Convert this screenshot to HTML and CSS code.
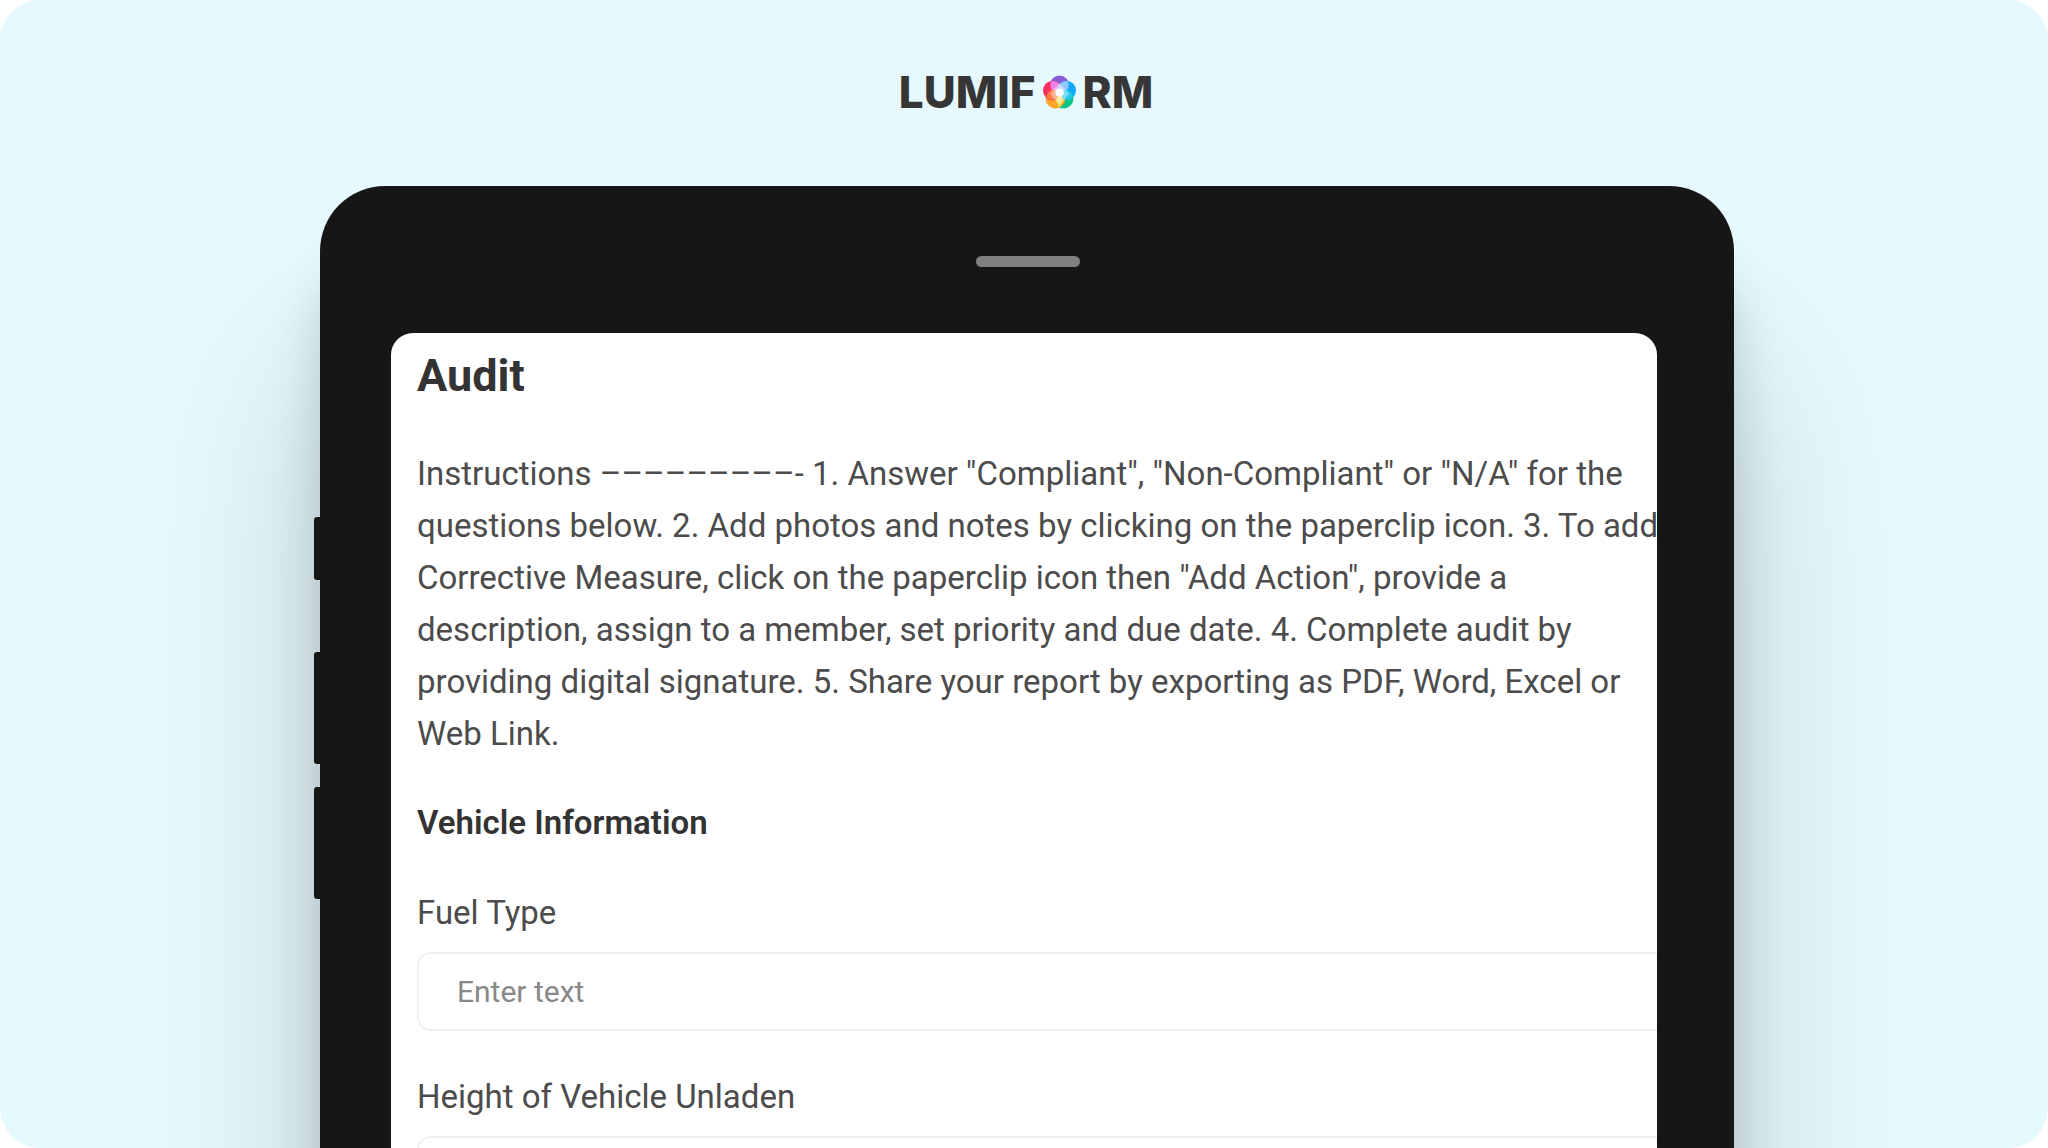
FILE: index.html
```html
<!DOCTYPE html>
<html lang="en">
<head>
    <meta charset="UTF-8">
    <meta name="viewport" content="width=device-width, initial-scale=1.0">
    <title>Lumiform - Audit</title>
    <link rel="stylesheet" href="styles.css">
</head>
<body>
    <div class="stage">
        <header class="logo">
            <span>LUMIF</span>
            <svg class="logo-mark" viewBox="0 0 32 33" aria-hidden="true">
                <circle cx="16" cy="10" r="9.500" fill="#8a5bd6"/>
                <circle cx="22.500" cy="15" r="9.500" fill="#12a8ff"/>
                <circle cx="20" cy="23" r="9.500" fill="#0cc48a"/>
                <circle cx="12" cy="23" r="9.500" fill="#ffa62b"/>
                <circle cx="9.500" cy="15" r="9.500" fill="#fb2f5d"/>
                <!-- petal overlaps -->
                <path d="M8 6c5-1 10 3 10 9l-2 2-8-3c-1-3-1-6 0-8z" fill="#f080ea"/>
                <path d="M24 6c-5-1-10 3-10 9l2 2 8-3c1-3 1-6 0-8z" fill="#93c4ff"/>
                <path d="M29 21c-2 3-7 4-10 2l-3-6 7-3c3 1 5 4 6 7z" fill="#27c8ea"/>
                <path d="M16 31c-4-4-4-9 0-14 4 5 4 10 0 14z" fill="#e8e45a"/>
                <path d="M3 21c2 3 7 4 10 2l3-6-7-3c-3 1-5 4-6 7z" fill="#ff7a45"/>
                <path d="M16 8l5 5 4 5-4 6-5 4-5-4-4-6 4-5z" fill="#fff" opacity=".4"/>
                <circle cx="16" cy="17" r="4" fill="#fff"/>
            </svg>
            <span>RM</span>
        </header>

        <main class="tablet">
            <div class="side-keys">
                <span class="key key-small"></span>
                <span class="key"></span>
                <span class="key"></span>
            </div>
            <div class="top-bezel">
                <span class="speaker"></span>
            </div>
            <form class="screen">
                <h1>Audit</h1>
                <p class="instructions">
                    Instructions –––––––––- 1. Answer "Compliant", "Non-Compliant" or "N/A" for the<br>
                    questions below. 2. Add photos and notes by clicking on the paperclip icon. 3. To add<br>
                    Corrective Measure, click on the paperclip icon then "Add Action", provide a<br>
                    description, assign to a member, set priority and due date. 4. Complete audit by<br>
                    providing digital signature. 5. Share your report by exporting as PDF, Word, Excel or<br>
                    Web Link.
                </p>
                <h2>Vehicle Information</h2>
                <div class="field">
                    <label for="fuelType">Fuel Type</label>
                    <input type="text" id="fuelType" placeholder="Enter text">
                </div>
                <div class="field">
                    <label for="vehicleHeight">Height of Vehicle Unladen</label>
                    <input type="text" id="vehicleHeight" placeholder="Enter text">
                </div>
            </form>
        </main>
    </div>
</body>
</html>
```

FILE: styles.css
```css
* {
    box-sizing: border-box;
}

body {
    margin: 0;
    background-color: #fff;
    color: #4c4c4c;
    font-family: Roboto, sans-serif;
}

.stage {
    height: 100vh;
    overflow: hidden;
    padding: 0 314px 0 320px;
    border-radius: 40px;
    background-color: #e6f9ff;
}

.logo {
    display: flex;
    justify-content: center;
    align-items: center;
    gap: 7px;
    height: 186px;
    padding: 0 2px 2px 0;
    color: #363636;
    font-family: Inter, sans-serif;
    font-size: 44px;
    font-weight: 800;
    line-height: 52px;
}

.logo-mark {
    width: 33px;
    height: 34px;
}

/* tablet frame, runs off the bottom of the stage */
.tablet {
    position: relative;
    min-height: 100vh;
    padding: 0 77px 0 71px;
    border-radius: 65px 65px 0 0;
    background-color: #161616;
    box-shadow: 0 180px 180px rgba(0, 0, 0, 0.18), 0 80px 50px rgba(0, 0, 0, 0.16);
}

.side-keys {
    position: absolute;
    top: 331px;
    left: -6px;
    display: flex;
    flex-direction: column;
    gap: 23px;
}

.key {
    width: 8px;
    height: 112px;
    border-radius: 3px 0 0 3px;
    background-color: #161616;
}

.key-small {
    height: 63px;
    margin-bottom: 49px;
}

.top-bezel {
    display: flex;
    justify-content: center;
    height: 147px;
    padding: 70px 0 0 8px;
}

.speaker {
    width: 104px;
    height: 11px;
    border-radius: 6px;
    background-color: #808080;
}

.screen {
    min-height: 100vh;
    overflow: hidden;
    padding: 15px 0 0 26px;
    border-radius: 22px 22px 0 0;
    background-color: #fff;
    font-size: 33px;
    font-weight: 400;
    line-height: 52px;
    white-space: nowrap;
}

h1 {
    margin: 0 0 44px;
    color: #333;
    font-size: 45px;
    font-weight: 700;
    line-height: 56px;
}

.instructions {
    margin: 0 0 37px;
}

h2 {
    margin: 0 0 38px;
    color: #333;
    font-size: 33px;
    font-weight: 600;
    line-height: 52px;
}

.field {
    display: flex;
    flex-direction: column;
    gap: 13px;
    width: 110%;
    margin-bottom: 40px;
}

.field input {
    height: 79px;
    padding: 0 38px;
    border: 2px solid #eef1f2;
    border-radius: 14px;
    background-color: #fff;
    color: #4c4c4c;
    font-family: inherit;
    font-size: 30px;
    font-weight: 400;
}

.field input::placeholder {
    color: #888;
}
```
